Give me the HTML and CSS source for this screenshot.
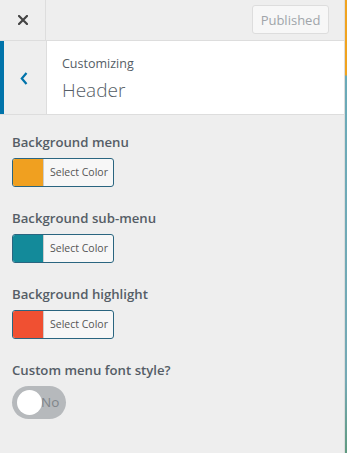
FILE: index.html
```html
<!DOCTYPE html>
<html lang="en">
<head>
    <meta charset="UTF-8">
    <meta name="viewport" content="width=device-width, initial-scale=1.0">
    <title>Customizer</title>
    <link rel="stylesheet" href="styles.css">
</head>
<body>
    <div class="sidebar">
        <div class="topbar">
            <a href="javascript:;" class="close">
                <svg width="10" height="10" viewBox="0 0 10 10"><path d="M1 1L9 9M9 1L1 9" stroke="#444" stroke-width="2.2" stroke-linecap="square"/></svg>
            </a>
            <button class="publish">Published</button>
        </div>
        <div class="section-title">
            <a href="javascript:;" class="back">
                <svg width="8" height="13" viewBox="0 0 8 13"><path d="M6.5 1L1.8 6.5L6.5 12" fill="none" stroke="#0073aa" stroke-width="2.2"/></svg>
            </a>
            <div class="titles">
                <span class="sub">Customizing</span>
                <h3>Header</h3>
            </div>
        </div>
        <ul class="controls">
            <li>
                <span class="label">Background menu</span>
                <button class="color-btn"><i class="swatch orange"></i><span>Select Color</span></button>
            </li>
            <li>
                <span class="label">Background sub-menu</span>
                <button class="color-btn"><i class="swatch teal"></i><span>Select Color</span></button>
            </li>
            <li>
                <span class="label">Background highlight</span>
                <button class="color-btn"><i class="swatch red"></i><span>Select Color</span></button>
            </li>
            <li>
                <span class="label">Custom menu font style?</span>
                <div class="toggle"><i class="knob"></i><span>No</span></div>
            </li>
        </ul>
    </div>
    <div class="preview"></div>
</body>
</html>
```

FILE: styles.css
```css
body {
    margin: 0;
    padding: 0;
    height: 453px;
    display: flex;
    overflow: hidden;
    font-family: "Open Sans", "Noto Sans", sans-serif;
    background-color: #eee;
}
.sidebar {
    width: 344px;
    border-right: 1px solid #ddd;
    background-color: #eee;
    display: flex;
    flex-direction: column;
}
.preview {
    flex: 1;
    background: linear-gradient(#f0a31f 0, #f0a31f 75px, #6aaab8 76px, #74a9b4 380px, #5f9a80 453px);
}
.topbar {
    height: 40px;
    border-bottom: 1px solid #ddd;
    display: flex;
    align-items: center;
    justify-content: space-between;
}
.close {
    width: 46px;
    height: 100%;
    border-right: 1px solid #ddd;
    display: flex;
    align-items: center;
    justify-content: center;
    padding-left: 1px;
    box-sizing: border-box;
}
.publish {
    width: 77px;
    height: 29px;
    margin: 0 15px 1px 0;
    padding: 0;
    border: 1px solid #ddd;
    border-radius: 3px;
    background-color: #f7f7f7;
    color: #a0a5aa;
    font-family: inherit;
    font-size: 13px;
}
.section-title {
    height: 73px;
    border-bottom: 1px solid #ddd;
    background-color: #fff;
    display: flex;
}
.back {
    width: 47px;
    border-left: 4px solid #0073aa;
    border-right: 1px solid #ddd;
    box-sizing: border-box;
    background-color: #eee;
    display: flex;
    align-items: center;
    justify-content: center;
    padding: 1px 2px 0 0;
}
.titles {
    padding: 14px 0 0 15px;
    color: #555d66;
}
.titles .sub {
    display: block;
    font-size: 12.5px;
    line-height: 18px;
}
.titles h3 {
    margin: 4px 0 0;
    font-size: 19px;
    font-weight: 300;
    line-height: 26px;
}
.controls {
    margin: 0;
    padding: 17px 12px 0;
    list-style: none;
}
.controls li {
    margin-bottom: 21px;
}
.label {
    display: block;
    font-size: 13.2px;
    font-weight: 600;
    line-height: 20px;
    color: #555d66;
    margin-bottom: 6px;
}
.color-btn {
    display: flex;
    width: 102px;
    height: 29px;
    padding: 0;
    border: 1px solid #2a6580;
    border-radius: 3px;
    overflow: hidden;
    background-color: #f7f7f7;
    font-family: inherit;
}
.swatch {
    width: 30px;
    height: 100%;
    border-right: 1px solid #ccc;
}
.orange { background-color: #f0a020; }
.teal { background-color: #138a9a; }
.red { background-color: #f05032; }
.color-btn span {
    flex: 1;
    line-height: 27px;
    font-size: 10.5px;
    color: #555;
    text-align: center;
    padding-left: 1px;
}
.toggle {
    position: relative;
    width: 54px;
    height: 33px;
    border-radius: 17px;
    background-color: #b6b9bc;
}
.knob {
    position: absolute;
    left: 5px;
    top: 4px;
    width: 25px;
    height: 25px;
    border-radius: 50%;
    background-color: #fff;
}
.toggle span {
    position: absolute;
    left: 29px;
    top: 0;
    line-height: 33px;
    font-size: 13.5px;
    color: #80858a;
}
```
